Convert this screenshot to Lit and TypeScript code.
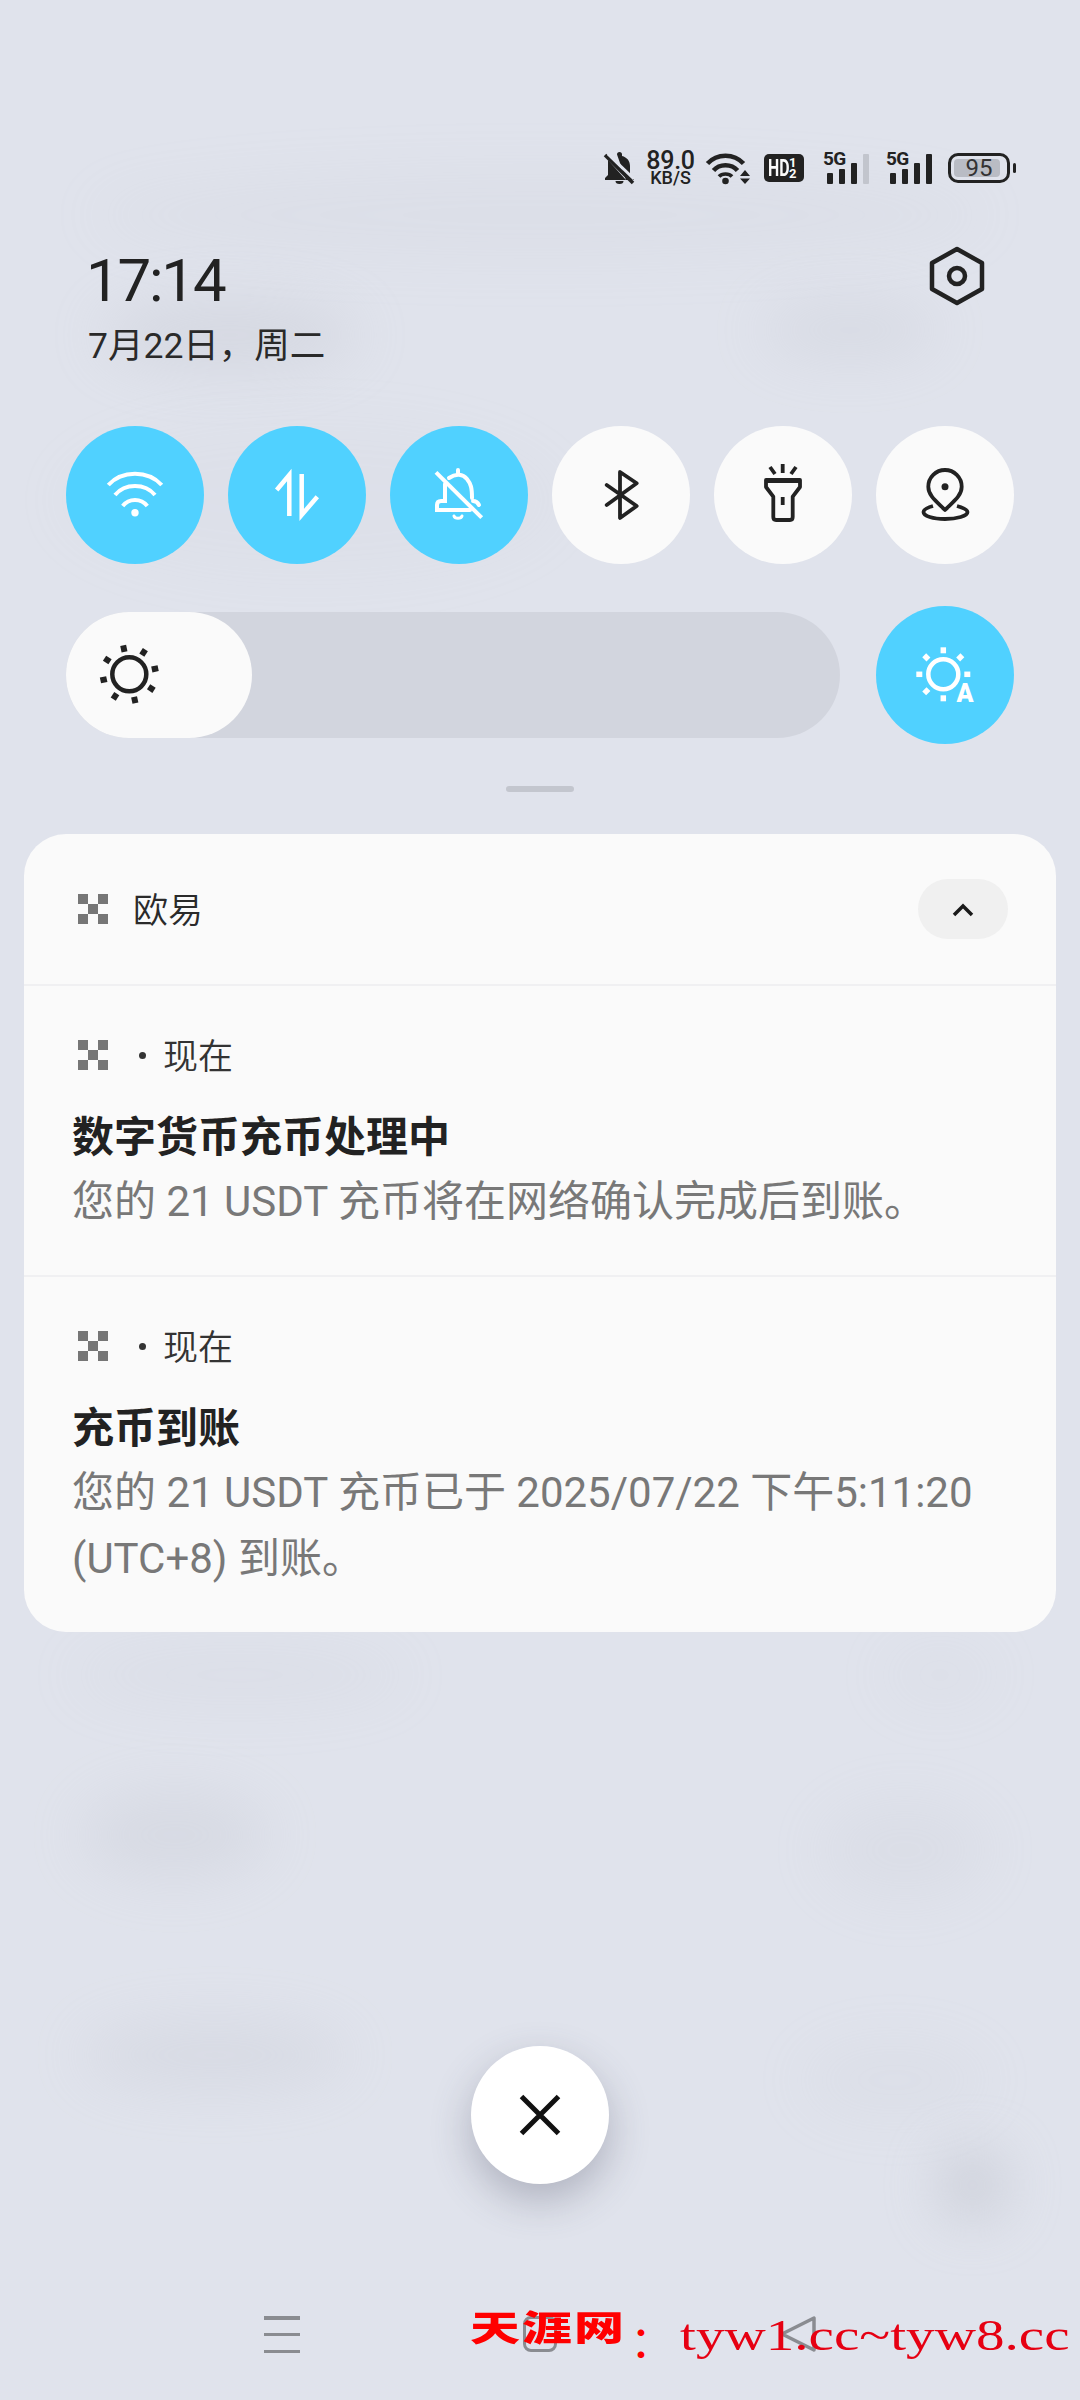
import { LitElement, html, css, svg } from "lit";
import { customElement } from "lit/decorators.js";

const blobs: [number, number, number, number, number][] = [
  [90, 170, 900, 90, 0.1],
  [100, 300, 260, 70, 0.28],
  [760, 300, 180, 60, 0.22],
  [60, 420, 500, 160, 0.07],
  [70, 1640, 340, 70, 0.1],
  [880, 1640, 120, 70, 0.08],
  [80, 1790, 190, 90, 0.22],
  [820, 1800, 170, 100, 0.13],
  [80, 2020, 270, 70, 0.22],
  [800, 2040, 190, 80, 0.1],
  [940, 2150, 65, 70, 0.55],
];

const rays = (r1: number, r2: number, w: number, start: number, skip: number[] = [], color = "#222") =>
  [0, 1, 2, 3, 4, 5, 6, 7]
    .filter((k) => !skip.includes(k))
    .map(
      (k) => svg`<line x1="0" y1=${-r1} x2="0" y2=${-r2} stroke=${color} stroke-width=${w} transform="rotate(${start + k * 45})"/>`
    );

const logo = () => html`<div class="logo">
  <i></i><b></b><i></i>
  <b></b><i></i><b></b>
  <i></i><b></b><i></i>
</div>`;

const sim = (last: boolean) => html`<div class="sim">
  <span class="g5">5G</span>
  <div class="bars">
    <i class="b1"></i><i class="b2"></i><i class="b3"></i><i class="b4 ${last ? "on" : ""}"></i>
  </div>
</div>`;

@customElement("app-root")
export class AppRoot extends LitElement {
  static styles = css`
    :host { display: block; }
    * { box-sizing: border-box; }
    .page {
      position: relative; width: 1080px; height: 2400px; overflow: hidden;
      background: #e0e3ec; color: #222;
      font-family: Roboto, "Noto Sans CJK SC", sans-serif;
      display: flex; flex-direction: column;
    }
    .blob { position: absolute; background: #b9bcc6; border-radius: 50%; filter: blur(28px); }
    .content { position: relative; display: flex; flex-direction: column; }
    svg { display: block; overflow: visible; flex: none; }

    .status { height: 36px; margin-top: 150px; padding-right: 64px; display: flex; justify-content: flex-end; align-items: center; }
    .st-bell { margin-right: 12px; }
    .speed { width: 47px; margin-right: 12px; display: flex; flex-direction: column; align-items: center; font-weight: 500; line-height: 1; }
    .speed .top { font-size: 25px; height: 19px; line-height: 19px; letter-spacing: -0.3px; }
    .speed .bot { font-size: 18px; height: 14px; line-height: 14px; margin-top: 1px; }
    .st-wifi { margin-right: 14px; }
    .hd { width: 40px; height: 28px; margin-right: 18px; background: #222; border-radius: 5px; color: #fafafa; display: flex; align-items: center; justify-content: flex-start; padding-left: 4px; font-weight: 700; overflow: hidden; }
    .hd .h { font-size: 24px; line-height: 24px; width: 21px; display: block; transform: scaleX(0.66); transform-origin: left center; white-space: nowrap; }
    .hd .n { display: flex; flex-direction: column; font-size: 13px; line-height: 11px; }
    .sim { position: relative; width: 47px; height: 32px; margin-right: 16px; }
    .g5 { position: absolute; left: 1px; top: -1px; font-size: 19px; line-height: 16px; font-weight: 700; letter-spacing: -0.6px; }
    .bars { position: absolute; left: 5px; bottom: 0; display: flex; gap: 6px; align-items: flex-end; }
    .bars i { display: block; width: 6px; background: #222; border-radius: 1px; }
    .b1 { height: 11px; } .b2 { height: 15px; } .b3 { height: 21px; }
    .bars .b4 { height: 30px; background: #c2c5cd; }
    .bars .b4.on { background: #222; }
    .battery { display: flex; align-items: center; gap: 3px; }
    .batt-body { position: relative; width: 62px; height: 30px; border: 3px solid #222; border-radius: 10px; padding: 3px; }
    .batt-fill { width: 46px; height: 100%; background: #b9bcc4; border-radius: 4px; }
    .batt-text { position: absolute; inset: 0; display: flex; align-items: center; justify-content: center; font-size: 24px; color: #333; }
    .nub { width: 3px; height: 10px; background: #222; border-radius: 2px; }

    .clock { margin-top: 60px; height: 120px; padding: 0 93px 0 86px; display: flex; justify-content: space-between; align-items: flex-start; }
    .time { font-size: 60px; line-height: 60px; font-weight: 400; letter-spacing: -2.200px; margin-top: 5px; color: #222; }
    .date { font-size: 35.500px; line-height: 44px; margin-top: 13px; padding-left: 2px; color: #2a2a2a; font-weight: 400; }

    .toggles { margin-top: 60px; padding: 0 66px; display: flex; gap: 24px; }
    .tg { width: 138px; height: 138px; border-radius: 50%; background: #fafafa; display: flex; align-items: center; justify-content: center; }
    .tg.on { background: #50d1ff; }

    .bright { margin-top: 42px; padding: 0 66px; display: flex; justify-content: space-between; align-items: center; }
    .bar { width: 774px; height: 126px; background: #d2d5de; border-radius: 63px; }
    .thumb { width: 186px; height: 126px; background: #fafafa; border-radius: 63px; padding-left: 33px; display: flex; align-items: center; }

    .handle { width: 68px; height: 6px; margin: 42px auto 0; background: #c3c6ce; border-radius: 3px; }

    .card { margin: 42px 24px 0; width: 1032px; height: 798px; background: #fafafa; border-radius: 42px; }
    .head { height: 150px; padding: 0 48px 0 54px; display: flex; align-items: center; justify-content: space-between; }
    .app { display: flex; align-items: center; gap: 25px; font-size: 35px; color: #2a2a2a; font-weight: 350; }
    .app span { margin-top: -3px; }
    .pill { width: 90px; height: 60px; border-radius: 30px; background: #f0f0f0; display: flex; align-items: center; justify-content: center; }
    .logo { width: 30px; height: 30px; display: grid; grid-template-columns: repeat(3, 10px); grid-auto-rows: 10px; flex: none; }
    .logo i { display: block; background: #767676; }
    .logo b { display: block; }
    .note { border-top: 2px solid #f0f0f2; padding: 49px 48px 40px; }
    .note + .note { padding-top: 49px; }
    .meta { height: 40px; padding-left: 6px; display: flex; align-items: center; font-size: 35px; color: #333; font-weight: 350; }
    .meta span:last-child { margin-top: -3px; }
    .dot { width: 7px; height: 7px; border-radius: 50%; background: #333; margin: 0 17px 0 31px; }
    .title { margin-top: 35px; font-size: 42px; line-height: 56px; font-weight: 700; color: #222; }
    .body { font-size: 42px; line-height: 66px; margin-top: 3px; color: #787878; font-weight: 400; }

    .fab { width: 138px; height: 138px; margin: 414px auto 0; border-radius: 50%; background: #fff; display: flex; align-items: center; justify-content: center; box-shadow: 0 16px 40px rgba(70, 75, 95, 0.32); }

    .nav { margin-top: 132px; padding-left: 264px; display: flex; align-items: flex-start; }
    .lines { width: 36px; height: 37px; margin-right: 223px; display: flex; flex-direction: column; justify-content: space-between; }
    .lines i { display: block; height: 3.500px; background: #8a8c91; }
    .home { width: 34px; height: 36px; margin-right: 223px; border: 3.500px solid #8a8c91; border-radius: 8px; }

    .mark { position: absolute; left: 470px; top: 2300px; display: flex; align-items: flex-start; color: #f00; white-space: nowrap; }
    .mark .cn { display: block; width: 156px; font-size: 50px; line-height: 58px; font-weight: 900; letter-spacing: 2px; transform: scaleY(0.7); transform-origin: center; }
    .mark .colon { font-size: 44px; line-height: 58px; width: 54px; font-weight: 400; margin-top: 14px; padding-left: 4px; }
    .mark .url { display: block; font-family: "Liberation Serif", serif; font-size: 45px; line-height: 50px; color: #e60012; margin-top: 10px; transform: scaleX(1.27); transform-origin: left center; }
  `;

  render() {
    return html`<div class="page">
      ${blobs.map(
        ([x, y, w, h, o]) =>
          html`<div class="blob" style="left:${x}px;top:${y}px;width:${w}px;height:${h}px;opacity:${o}"></div>`
      )}
      <div class="content">
        <div class="status">
          <svg class="st-bell" width="32" height="32" viewBox="0 0 32 32">
            <path fill="#222" d="M14 2.500a2.500 2.500 0 0 1 5 0V4c5 1.300 8 5 8 10v9l4 3v2H2v-2l3-3V8l18 20z"/>
            <path fill="#222" d="M12.500 29h8a4 3 0 0 1-8 0z"/>
            <path d="M2 3L30 31" stroke="#222" stroke-width="3.500"/>
            <path d="M5 2L31 27" stroke="#e0e3ec" stroke-width="3"/>
          </svg>
          <div class="speed"><span class="top">89.0</span><span class="bot">KB/S</span></div>
          <svg class="st-wifi" width="44" height="31" viewBox="0 0 44 31">
            <g fill="none" stroke="#222" stroke-width="4.500">
              <path d="M1.500 10.500C11 0 28 0 37.500 10.500"/>
              <path d="M7.500 17.500C13.500 10.500 25.500 10.500 31.500 17.500"/>
              <path d="M13 23.500C16 20 23 20 26 23.500" stroke-width="3.500"/>
            </g>
            <circle cx="19.500" cy="28" r="3.300" fill="#222"/>
            <path fill="#222" d="M39 17l5 6H34zM34 25.500h10l-5 5.500z"/>
          </svg>
          <div class="hd"><span class="h">HD</span><span class="n"><span>1</span><span>2</span></span></div>
          ${sim(false)} ${sim(true)}
          <div class="battery">
            <div class="batt-body"><div class="batt-fill"></div><div class="batt-text">95</div></div>
            <div class="nub"></div>
          </div>
        </div>

        <div class="clock">
          <div>
            <div class="time">17:14</div>
            <div class="date">7月22日，周二</div>
          </div>
          <svg width="60" height="60" viewBox="0 0 60 60" fill="none" stroke="#222" stroke-width="4.500" stroke-linejoin="round">
            <path d="M30 3L55 17V43L30 57L5 43V17Z"/>
            <circle cx="30" cy="30" r="8"/>
          </svg>
        </div>

        <div class="toggles">
          <div class="tg on">
            <svg width="60" height="60" viewBox="0 0 60 60" fill="none" stroke="#fff" stroke-width="4">
              <path d="M3.300 20C17 5 43 5 56.700 20"/>
              <path d="M10 30C20 18 40 18 50 30"/>
              <path d="M17.700 41C24 33 36 33 42.300 41"/>
              <circle cx="30" cy="47.700" r="3.700" fill="#fff" stroke="none"/>
            </svg>
          </div>
          <div class="tg on">
            <svg width="60" height="60" viewBox="0 0 60 60" fill="none" stroke="#fff" stroke-width="4.500">
              <path d="M9.700 25L22.300 10V51"/>
              <path d="M34.700 9V50L50.300 31.700"/>
            </svg>
          </div>
          <div class="tg on">
            <svg width="60" height="60" viewBox="0 0 60 60" fill="none" stroke="#fff" stroke-width="4" stroke-linecap="round">
              <path d="M20 13C27 8 34 9 38 14C42 19 43 23 43 33"/>
              <path d="M29 9V5"/>
              <path d="M16 19V36H12C9 36 8 38 8 40V45H41"/>
              <path d="M44 36C47 36 49 38 50 40"/>
              <path d="M25 51C26 54 32 54 33 51" stroke-width="3"/>
              <path d="M7 7.300L52.700 52.700" stroke-linecap="butt"/>
            </svg>
          </div>
          <div class="tg">
            <svg width="60" height="60" viewBox="0 0 60 60" fill="none" stroke="#222" stroke-width="3.800" stroke-linejoin="round" stroke-linecap="round">
              <path d="M15.700 20L45.700 41L29 53V7L45.700 18.300L15.700 40"/>
            </svg>
          </div>
          <div class="tg">
            <svg width="60" height="60" viewBox="0 0 60 60" fill="none" stroke="#222" stroke-width="3.800" stroke-linejoin="round">
              <path d="M13 15H47V22L39.700 31.700V52Q39.700 55 37 55H23Q20.300 55 20.300 52V31.700L13 22Z"/>
              <path d="M13 16.500H47" stroke-width="3"/>
              <path d="M29.700 -1V8M17 2L22 9M43 2L38 9"/>
              <path d="M29.700 32V40"/>
            </svg>
          </div>
          <div class="tg">
            <svg width="60" height="60" viewBox="0 0 60 60" fill="none" stroke="#222" stroke-width="3.800" stroke-linejoin="round">
              <path d="M30 45C22 37 13.300 31 13.300 21.700A16.700 16.700 0 0 1 46.700 21.700C46.700 31 38 37 30 45Z"/>
              <circle cx="30" cy="21.700" r="3.500" fill="#222" stroke="none"/>
              <path d="M18 41C11 43 8.500 45 8.500 47C8.500 51 18 54 30 54C42 54 52.500 51 52.500 47C52.500 45 49 43 42 41"/>
            </svg>
          </div>
        </div>

        <div class="bright">
          <div class="bar">
            <div class="thumb">
              <svg width="60" height="60" viewBox="-30 -30 60 60">
                <g transform="translate(0.300 -0.700)">
                  <circle r="17" fill="none" stroke="#222" stroke-width="4.500"/>
                  ${rays(23, 29.500, 6, -12)}
                </g>
              </svg>
            </div>
          </div>
          <div class="tg on">
            <svg width="60" height="60" viewBox="0 0 60 60">
              <g transform="translate(28.300 29.300)">
                <circle r="15" fill="none" stroke="#fff" stroke-width="4.500"/>
                ${rays(21, 27, 5.500, 0, [3], "#fff")}
              </g>
              <text x="41.500" y="57" font-family="Roboto" font-weight="900" font-size="25" fill="#fff">A</text>
            </svg>
          </div>
        </div>

        <div class="handle"></div>

        <div class="card">
          <div class="head">
            <div class="app">${logo()}<span>欧易</span></div>
            <div class="pill">
              <svg width="20" height="13" viewBox="0 0 20 13" fill="none" stroke="#1a1a1a" stroke-width="3.500"><path d="M1 12L10 3L19 12"/></svg>
            </div>
          </div>
          <div class="note">
            <div class="meta">${logo()}<span class="dot"></span><span>现在</span></div>
            <div class="title">数字货币充币处理中</div>
            <div class="body">您的 21 USDT 充币将在网络确认完成后到账。</div>
          </div>
          <div class="note">
            <div class="meta">${logo()}<span class="dot"></span><span>现在</span></div>
            <div class="title">充币到账</div>
            <div class="body">您的 21 USDT 充币已于 2025/07/22 下午5:11:20 (UTC+8) 到账。</div>
          </div>
        </div>

        <div class="fab">
          <svg width="40" height="40" viewBox="0 0 40 40" stroke="#111" stroke-width="5" fill="none">
            <path d="M1.500 1.500L38.500 38.500M38.500 1.500L1.500 38.500"/>
          </svg>
        </div>

        <div class="nav">
          <div class="lines"><i></i><i></i><i></i></div>
          <div class="home"></div>
          <svg width="36" height="36" viewBox="0 0 36 36" fill="none" stroke="#8a8c91" stroke-width="3.500" stroke-linejoin="round">
            <path d="M34 2V34L2 18Z"/>
          </svg>
        </div>
      </div>
      <div class="mark"><span class="cn">天涯网</span><span class="colon">：</span><span class="url">tyw1.cc~tyw8.cc</span></div>
    </div>`;
  }
}
